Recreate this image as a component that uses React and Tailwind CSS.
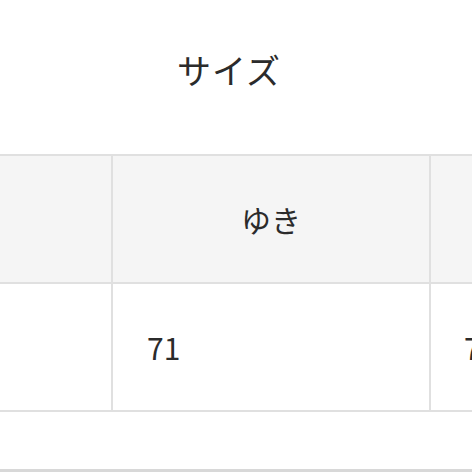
export default function App() {
  const font = { fontFamily: '"Noto Sans CJK JP", "Noto Sans", sans-serif' };
  return (
    <div className="w-[472px] h-[472px] overflow-hidden bg-white text-[#2b2b2b] relative" style={font}>
      <div className="pt-[50px] h-[154px]">
        <div className="text-center pr-[14px] text-[34px] leading-[40px] tracking-[1px]">サイズ</div>
      </div>
      <div className="grid grid-cols-[111px_316px_200px] gap-[2px] bg-[#e0e0e0] py-[2px] w-[631px]">
        <div className="h-[126px] bg-[#f5f5f5]"></div>
        <div className="h-[126px] bg-[#f5f5f5] flex items-center justify-center text-[30px] leading-none">ゆき</div>
        <div className="h-[126px] bg-[#f5f5f5]"></div>
        <div className="h-[126px] bg-white"></div>
        <div className="h-[126px] bg-white flex items-center pl-[34px] text-[30px] leading-none">71</div>
        <div className="h-[126px] bg-white flex items-center pl-[33px] text-[30px] leading-none">71</div>
      </div>
      <div className="h-[57px] bg-white"></div>
      <div className="h-[3px] bg-[#d8d8d8]"></div>
    </div>
  );
}
